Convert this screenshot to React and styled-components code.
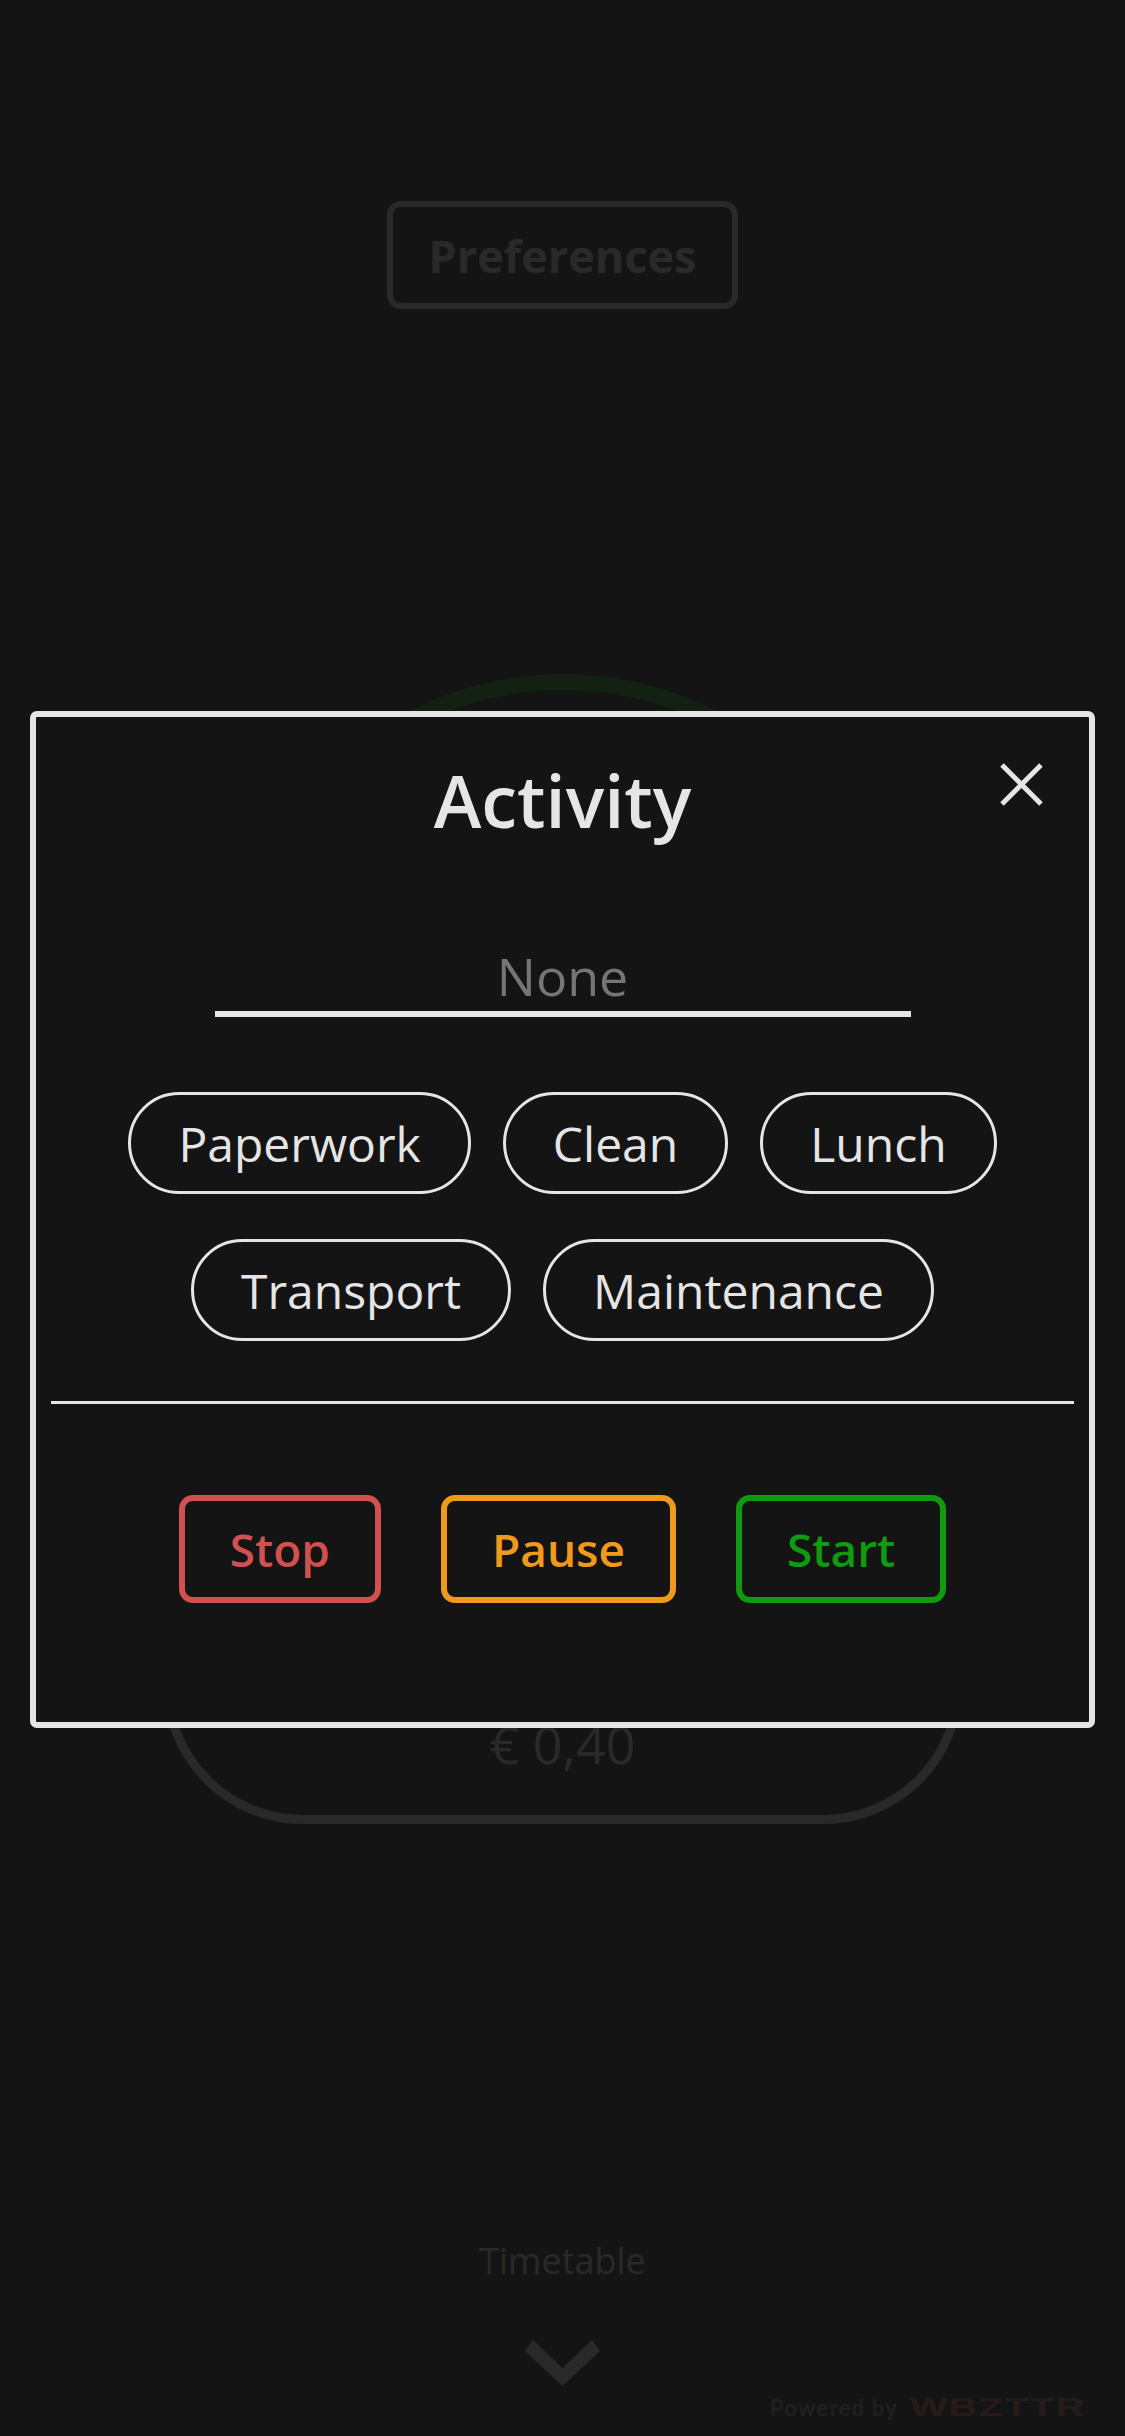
import React from "react";
import styled, { createGlobalStyle } from "styled-components";

const Global = createGlobalStyle`
  html, body { margin: 0; padding: 0; background: #141414; }
  * { box-sizing: border-box; }
  body { font-family: "Open Sans", "Noto Sans", sans-serif; color: #e5e5e5; }
`;

const Page = styled.div`
  position: relative;
  width: 1125px;
  height: 2436px;
  overflow: hidden;
  background: #141414;
`;
const Main = styled.main`
  display: flex;
  flex-direction: column;
  align-items: center;
  padding-top: 201px;
`;
const PrefButton = styled.button`
  width: 351px;
  height: 108px;
  border: 6px solid #e5e5e5;
  border-radius: 14px;
  background: none;
  color: #e5e5e5;
  font: 700 45px "Open Sans", sans-serif;
`;
const TimerRing = styled.div`
  width: 670px;
  height: 670px;
  margin-top: 365px;
  border: 16px solid #0f9a0f;
  border-radius: 50%;
`;
const PriceCard = styled.div`
  display: flex;
  align-items: flex-end;
  justify-content: center;
  width: 800px;
  height: 324px;
  margin-top: 156px;
  padding-bottom: 36px;
  border: 9px solid #e5e5e5;
  border-radius: 140px;
  font-size: 52px;
  line-height: 71px;
`;
const Timetable = styled.div`
  margin-top: 412px;
  font-size: 36px;
  line-height: 49px;
`;
const Chevron = styled.svg`
  display: block;
  width: 75px;
  height: 46px;
  margin-top: 55px;
  fill: #e5e5e5;
`;
const Footer = styled.footer`
  display: flex;
  align-items: center;
  justify-content: flex-end;
  gap: 12px;
  align-self: stretch;
  height: 30px;
  margin-top: 6px;
  padding-right: 30px;
`;
const Powered = styled.span`
  font: 700 22px Lato, sans-serif;
  letter-spacing: 1.2px;
  color: #8c8c8c;
`;
const Logo = styled.span`
  display: inline-block;
  width: 185px;
  font: 900 26px "Liberation Sans", sans-serif;
  letter-spacing: 1px;
  color: #d15050;
  transform: scaleX(1.52);
  transform-origin: left center;
  white-space: nowrap;
`;

const Overlay = styled.div`
  position: absolute;
  inset: 0;
  display: flex;
  align-items: flex-start;
  justify-content: center;
  padding-top: 711px;
  background: rgba(20, 20, 20, 0.9);
`;
const Modal = styled.section`
  position: relative;
  display: flex;
  flex-direction: column;
  align-items: center;
  width: 1065px;
  height: 1017px;
  padding: 34px 15px 0;
  border: 6px solid #e5e5e5;
  border-radius: 7px;
  background: #141414;
`;
const Title = styled.h2`
  margin: 0;
  font-size: 72px;
  font-weight: 600;
  line-height: 98px;
  color: #e5e5e5;
`;
const CloseButton = styled.button`
  position: absolute;
  top: 46px;
  right: 46px;
  width: 43px;
  height: 43px;
  padding: 0;
  border: 0;
  background: none;
  svg { display: block; stroke: #e5e5e5; stroke-width: 5; }
`;
const NameField = styled.div`
  width: 696px;
  margin-top: 91px;
  border-bottom: 6px solid #e5e5e5;
  font-size: 52px;
  line-height: 71px;
  text-align: center;
  color: #757575;
`;
const Chips = styled.div`
  display: flex;
  flex-wrap: wrap;
  justify-content: center;
  gap: 45px 32px;
  width: 900px;
  margin-top: 75px;
`;
const Chip = styled.button`
  height: 102px;
  padding: 0 47px;
  border: 3px solid #e5e5e5;
  border-radius: 51px;
  background: none;
  color: #e5e5e5;
  font: 400 48px "Open Sans", sans-serif;
`;
const Divider = styled.hr`
  align-self: stretch;
  height: 3px;
  margin: 60px 0 0;
  border: 0;
  background: #e5e5e5;
`;
const Actions = styled.div`
  display: flex;
  justify-content: center;
  gap: 60px;
  margin-top: 91px;
`;
const ActionButton = styled.button`
  height: 108px;
  padding: 0 45px;
  border: 6px solid ${(p) => p.$color};
  border-radius: 14px;
  background: none;
  color: ${(p) => p.$color};
  font: 600 46px "Open Sans", sans-serif;
`;

const chips = ["Paperwork", "Clean", "Lunch", "Transport", "Maintenance"];
const actions = [
  ["Stop", "#d15050"],
  ["Pause", "#f09a1c"],
  ["Start", "#0f9a0f"],
];

export default function App() {
  return (
    <Page>
      <Global />
      <Main>
        <PrefButton>Preferences</PrefButton>
        <TimerRing />
        <PriceCard>€ 0,40</PriceCard>
        <Timetable>Timetable</Timetable>
        <Chevron viewBox="0 0 75 46">
          <polygon points="0,11 8,0 37.5,28 67,0 75,11 37.5,46" />
        </Chevron>
        <Footer>
          <Powered>Powered by</Powered>
          <Logo>WBZTTR</Logo>
        </Footer>
      </Main>
      <Overlay>
        <Modal>
          <Title>Activity</Title>
          <CloseButton aria-label="Close">
            <svg width="43" height="43" viewBox="0 0 43 43" fill="none">
              <path d="M2 2 L41 41 M41 2 L2 41" />
            </svg>
          </CloseButton>
          <NameField>None</NameField>
          <Chips>
            {chips.map((c) => (
              <Chip key={c}>{c}</Chip>
            ))}
          </Chips>
          <Divider />
          <Actions>
            {actions.map(([label, color]) => (
              <ActionButton key={label} $color={color}>
                {label}
              </ActionButton>
            ))}
          </Actions>
        </Modal>
      </Overlay>
    </Page>
  );
}
